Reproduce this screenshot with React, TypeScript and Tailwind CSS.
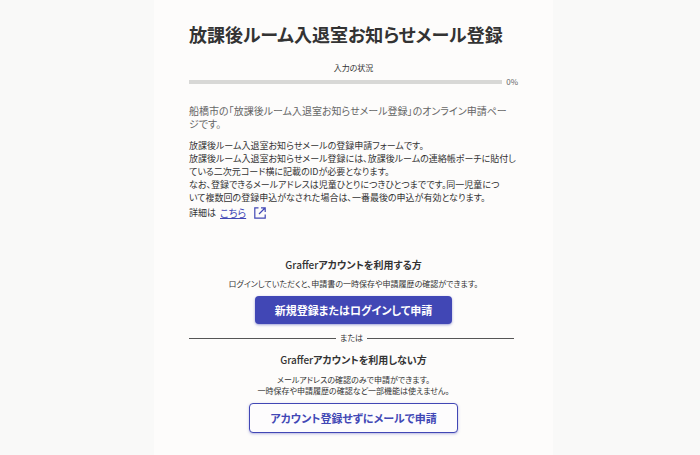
import type { ReactNode } from 'react'

function Progress({ value }: { value: number }) {
  return (
    <div className="mt-[14px]">
      <p id="progress-label" className="text-center text-[8px] leading-4">入力の状況</p>
      <div className="flex items-center gap-1 h-3">
        <div
          role="progressbar"
          aria-labelledby="progress-label"
          aria-valuenow={value}
          className="flex-1 h-1 bg-[#d8d8d6] overflow-hidden"
        >
          <div className="h-full bg-[#4147b5]" style={{ width: `${value}%` }} />
        </div>
        <span className="text-[8px] leading-3 text-[#666]">{value}%</span>
      </div>
    </div>
  )
}

function ExternalIcon() {
  return (
    <svg className="size-3" viewBox="0 0 12 12" fill="none" stroke="currentColor" strokeWidth="1.2" aria-hidden="true">
      <path d="M4.5 0.8H0.8v10.4h10.4V7.5" />
      <path d="M7 0.8h4.2V5M11 1L5 7" />
    </svg>
  )
}

function AccountTitle({ children }: { children: ReactNode }) {
  return (
    <h2 className="text-center text-[10px] leading-4 font-bold">
      <span className="font-medium">Graffer</span>
      {children}
    </h2>
  )
}

export default function App() {
  return (
    <div lang="ja" className="min-h-screen bg-[#f9f9f8] pl-[7px] text-[#333] font-['Noto_Sans_CJK_JP',sans-serif] [font-feature-settings:'palt']">
      <main className="max-w-[399px] min-h-screen mx-auto px-[35px] pt-[22px] pb-5 bg-[#fdfcfb]">
        <h1 className="text-[18px] leading-6 font-bold whitespace-nowrap">放課後ルーム入退室お知らせメール登録</h1>
        <Progress value={0} />

        <p className="mt-4 text-[10px] leading-[13px] text-[#666]">
          船橋市の「放課後ルーム入退室お知らせメール登録」のオンライン申請ペー
          <br />
          ジです。
        </p>
        <p className="mt-[9px] text-[9px] leading-[13px] whitespace-nowrap">
          放課後ルーム入退室お知らせメールの登録申請フォームです。
          <br />
          放課後ルーム入退室お知らせメール登録には、放課後ルームの連絡帳ポーチに貼付し
          <br />
          ている二次元コード横に記載のIDが必要となります。
          <br />
          なお、登録できるメールアドレスは児童ひとりにつきひとつまでです。同一児童につ
          <br />
          いて複数回の登録申込がなされた場合は、一番最後の申込が有効となります。
        </p>
        <p className="mt-px flex items-center gap-1 text-[9px] leading-4">
          詳細は
          <a href="#details" className="flex items-center gap-2 text-[10px] text-[#4147b5]">
            <span className="underline">こちら</span>
            <ExternalIcon />
          </a>
        </p>

        <section className="mt-9 flex flex-col items-center">
          <AccountTitle>アカウントを利用する方</AccountTitle>
          <p className="mt-[3px] text-[8px] leading-4 whitespace-nowrap">ログインしていただくと、申請書の一時保存や申請履歴の確認ができます。</p>
          <button type="button" className="mt-1 h-7 px-5 rounded bg-[#4147b5] text-[11px] leading-4 font-bold text-white shadow-sm shadow-[#4147b5]/40">
            新規登録またはログインして申請
          </button>
        </section>

        <div className="mt-2 pr-1 flex items-center gap-1 text-[8px] leading-3">
          <span className="flex-1 h-px bg-[#555]" />
          または
          <span className="flex-1 h-px bg-[#555]" />
        </div>

        <section className="mt-2 flex flex-col items-center">
          <AccountTitle>アカウントを利用しない方</AccountTitle>
          <p className="mt-[6px] text-center text-[8px] leading-[11px] whitespace-nowrap">
            メールアドレスの確認のみで申請ができます。
            <br />
            一時保存や申請履歴の確認など一部機能は使えません。
          </p>
          <button type="button" className="mt-[7px] h-[30px] px-5 rounded border border-[#4147b5] bg-[#fdfcfd] text-[11px] leading-4 font-bold text-[#4147b5] shadow-sm shadow-[#4147b5]/30">
            アカウント登録せずにメールで申請
          </button>
        </section>
      </main>
    </div>
  )
}
